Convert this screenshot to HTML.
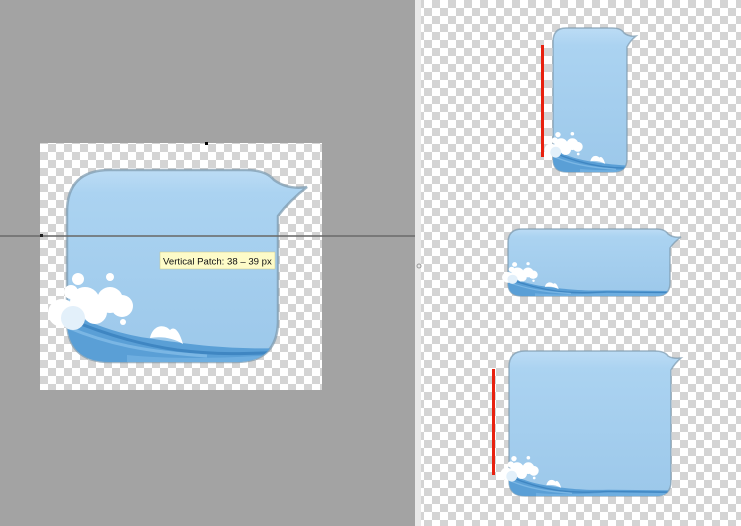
<!DOCTYPE html>
<html><head><style>
html,body{margin:0;padding:0;width:741px;height:526px;overflow:hidden;background:#a3a3a3;}
</style></head><body>
<svg width="741" height="526" viewBox="0 0 741 526" xmlns="http://www.w3.org/2000/svg" style="display:block">
<defs>
<pattern id="chk" width="16" height="16" patternUnits="userSpaceOnUse">
<rect width="16" height="16" fill="#ffffff"/>
<rect width="8" height="8" fill="#d4d4d4"/>
<rect x="8" y="8" width="8" height="8" fill="#d4d4d4"/>
</pattern>
<linearGradient id="bg" x1="0" y1="0" x2="0" y2="1">
<stop offset="0" stop-color="#bcdcf5"/>
<stop offset="0.12" stop-color="#abd3f1"/>
<stop offset="1" stop-color="#9cc8ea"/>
</linearGradient>
<g id="wb">
<path d="M-20,-60 C10,-45 40,-30 80,-24 C120,-18 160,-12 220,-14 L400,-12 L400,10 L-20,10 Z" fill="#5a9fd6"/>
<path d="M-10,-48 C30,-30 70,-18 110,-12 C150,-7 180,-8 215,-10 L400,-8" fill="none" stroke="#3f86c2" stroke-width="3"/>
<path d="M0,-35 C40,-18 80,-10 140,-6" fill="none" stroke="#7ab6e4" stroke-width="3"/>
<path d="M60,-7 C110,-2 170,-4 220,-8 L400,-6 L400,0 L60,0 Z" fill="#6eaee0"/>
</g>
<g id="foam">
<path d="M83,-24 C86,-38 98,-38 103,-32 C107,-36 112,-32 116,-18 C106,-24 95,-26 83,-24 Z" fill="#ffffff"/>
<circle cx="-5" cy="-49" r="14" fill="#fff"/>
<circle cx="18" cy="-60" r="15" fill="#fff"/>
<circle cx="43" cy="-62" r="13" fill="#fff"/>
<circle cx="28" cy="-50" r="12" fill="#fff"/>
<circle cx="55" cy="-56" r="11" fill="#fff"/>
<circle cx="6" cy="-44" r="12" fill="#e3f0fa"/>
<circle cx="11" cy="-83" r="6" fill="#fff"/>
<circle cx="4" cy="-70" r="7" fill="#fff"/>
<circle cx="43" cy="-85" r="4" fill="#fff"/>
<circle cx="56" cy="-40" r="3" fill="#fff"/>
</g>
<clipPath id="c1"><path d="M110,170 H246 Q270,170 278,186 V320 Q278,362 236,362 H110 Q67,362 67,320 V212 Q67,170 110,170 Z"/></clipPath>
<clipPath id="c2"><path d="M566,28 H612 Q627,28 627,44 V159 Q627,172 613,172 H567 Q553,172 553,159 V42 Q553,28 566,28 Z"/></clipPath>
<clipPath id="c3"><path d="M522,229 H656 Q670,229 670,244 V283 Q670,296 656,296 H522 Q508,296 508,283 V243 Q508,229 522,229 Z"/></clipPath>
<clipPath id="c4"><path d="M525,351 H654 Q671,351 671,366 V481 Q671,496 656,496 H525 Q509,496 509,481 V367 Q509,351 525,351 Z"/></clipPath>
</defs>

<rect x="0" y="0" width="415" height="526" fill="#a3a3a3"/>
<rect x="40" y="143" width="282" height="247" fill="url(#chk)"/>
<rect x="205" y="142" width="3" height="3" fill="#000"/>

<path d="M110,170 H246 Q266,170 274,180 Q288,190 307,187 Q290,200 278,216 V320 Q278,362 236,362 H110 Q67,362 67,320 V212 Q67,170 110,170 Z" fill="url(#bg)" stroke="#7c98ad" stroke-width="2.5" stroke-opacity="0.7"/>
<g clip-path="url(#c1)"><use href="#wb" transform="translate(67,362)"/></g>
<use href="#foam" transform="translate(67,362)"/>
<rect x="0" y="235" width="415" height="2" fill="#6d6d6d" opacity="0.8"/>
<rect x="40" y="234" width="3" height="3" fill="#222"/>
<rect x="160" y="252" width="115" height="17" fill="#fdfbc8" stroke="#c9c68c" stroke-width="0.5"/>
<text x="163" y="264.5" font-family="Liberation Sans, sans-serif" font-size="9.6" fill="#111">Vertical Patch: 38 – 39 px</text>

<rect x="415" y="0" width="6" height="526" fill="#e8e8e8"/>
<rect x="421" y="0" width="320" height="526" fill="url(#chk)"/>
<circle cx="419" cy="266" r="2" fill="none" stroke="#999"/>

<path d="M566,28 H612 Q621,28 624,33 Q629,37 636,36 Q630,41 627,47 V159 Q627,172 613,172 H567 Q553,172 553,159 V42 Q553,28 566,28 Z" fill="url(#bg)" stroke="#7c98ad" stroke-width="1.5" stroke-opacity="0.7"/>
<g clip-path="url(#c2)"><use href="#wb" transform="translate(553,172) scale(0.45)"/></g>
<use href="#foam" transform="translate(553,172) scale(0.45)"/>
<rect x="541" y="45" width="3" height="112" fill="#e8210f"/>

<path d="M522,229 H656 Q665,229 668,234 Q673,238 681,237 Q674,242 670,248 V283 Q670,296 656,296 H522 Q508,296 508,283 V243 Q508,229 522,229 Z" fill="url(#bg)" stroke="#7c98ad" stroke-width="1.5" stroke-opacity="0.7"/>
<g clip-path="url(#c3)"><use href="#wb" transform="translate(508,296) scale(0.45,0.4)"/></g>
<use href="#foam" transform="translate(510,296) scale(0.42,0.38)"/>

<path d="M525,351 H654 Q665,351 668,356 Q673,359 681,358 Q675,363 671,370 V481 Q671,496 656,496 H525 Q509,496 509,481 V367 Q509,351 525,351 Z" fill="url(#bg)" stroke="#7c98ad" stroke-width="1.5" stroke-opacity="0.7"/>
<g clip-path="url(#c4)"><use href="#wb" transform="translate(509,496) scale(0.45)"/></g>
<use href="#foam" transform="translate(509,496) scale(0.45)"/>
<rect x="492" y="369" width="3" height="106" fill="#e8210f"/>
</svg>
</body></html>
